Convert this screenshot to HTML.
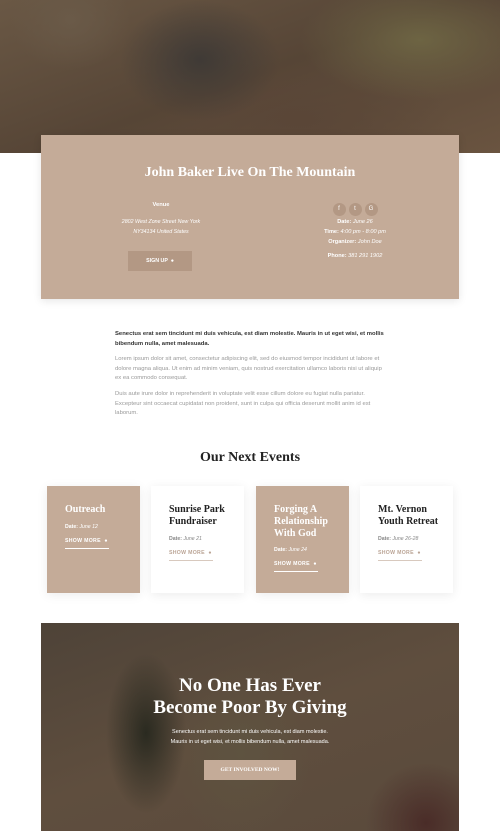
<!DOCTYPE html>
<html><head><style>
*{margin:0;padding:0;box-sizing:border-box}
body{width:500px;height:831px;background:#fff;position:relative;overflow:hidden;font-family:"Liberation Sans",sans-serif}
.serif{font-family:"Liberation Serif",serif;font-weight:bold}
.hero{position:absolute;left:0;top:0;width:500px;height:153px;background:
radial-gradient(ellipse 60px 50px at 70px 20px,#6a5a48,transparent),
radial-gradient(ellipse 80px 60px at 200px 60px,#3f3a36,transparent),
radial-gradient(ellipse 120px 60px at 420px 40px,#6d6443,transparent),
radial-gradient(ellipse 150px 60px at 300px 120px,#5a4637,transparent),
linear-gradient(160deg,#6a5845,#564536 50%,#6a5440);}
.box{position:absolute;left:41px;top:135px;width:418px;height:164px;background:#c4ab98;box-shadow:0 2px 8px rgba(0,0,0,.1);color:#fff;text-align:center}
.abs{position:absolute}
.ic{display:inline-block;width:13px;height:13px;border-radius:50%;background:#b39884;font-size:6px;line-height:13px;margin:0 1.5px;color:#fff}
p.t{font-size:5.9px;line-height:9.6px;color:#999;}
.card{position:absolute;top:486px;width:93px;height:107px;box-shadow:0 2px 10px rgba(0,0,0,.08)}
.card h3{font-family:"Liberation Serif",serif;font-size:10px;line-height:12px;font-weight:bold;position:absolute;left:18px;top:18px}
.card .d{position:absolute;left:18px;font-size:5.2px}
.card .s{position:absolute;left:18px;font-size:5.2px;font-weight:bold;letter-spacing:.3px;padding-bottom:4px;border-bottom:1.5px solid;width:44px}
.b{background:#c4ab98;color:#fff}.w{background:#fff;color:#222}
.w .s{color:#bba596;border-color:#d8c9be}.w .d{color:#888}
.give{position:absolute;left:41px;top:623px;width:418px;height:208px;background:
radial-gradient(ellipse 40px 80px at 105px 110px,#2a2a20,transparent),
radial-gradient(ellipse 70px 90px at 200px 130px,#5e5340,transparent),
radial-gradient(ellipse 60px 60px at 385px 200px,#4a2c28,transparent),
linear-gradient(160deg,#4e4338,#5f4e3e 50%,#5a4a3c);color:#fff;text-align:center}
</style></head><body>
<div class="hero"></div>
<div class="box">
<div class="abs serif" style="left:0;width:418px;top:30px;font-size:14px">John Baker Live On The Mountain</div>
<div class="abs" style="left:60px;width:120px;top:67px;font-size:5.8px;font-weight:bold">Venue</div>
<div class="abs" style="left:60px;width:120px;top:82px;font-size:5.3px;line-height:10px;font-style:italic">2802 West Zone Street New York<br>NY34134 United States</div>
<div class="abs" style="left:87px;top:116px;width:64px;height:20px;background:#b39884;font-size:5.3px;line-height:20px;font-weight:bold">SIGN UP &nbsp;●</div>
<div class="abs" style="left:250px;width:128px;top:62px"><span class="ic">f</span><span class="ic">t</span><span class="ic">G</span></div>
<div class="abs" style="left:250px;width:128px;top:82px;font-size:5.6px;line-height:10px"><b>Date:</b> <i>June 26</i><br><b>Time:</b> <i>4:00 pm - 8:00 pm</i><br><b>Organizer:</b> <i>John Doe</i></div>
<div class="abs" style="left:250px;width:128px;top:118px;font-size:5.6px"><b>Phone:</b> <i>381 291 1902</i></div>
</div>
<div class="abs" style="left:115px;top:330px;width:270px">
<p class="t" style="color:#333;font-weight:bold">Senectus erat sem tincidunt mi duis vehicula, est diam molestie. Mauris in ut eget wisi, et mollis bibendum nulla, amet malesuada.</p>
<p class="t" style="margin-top:6px">Lorem ipsum dolor sit amet, consectetur adipiscing elit, sed do eiusmod tempor incididunt ut labore et dolore magna aliqua. Ut enim ad minim veniam, quis nostrud exercitation ullamco laboris nisi ut aliquip ex ea commodo consequat.</p>
<p class="t" style="margin-top:6px">Duis aute irure dolor in reprehenderit in voluptate velit esse cillum dolore eu fugiat nulla pariatur. Excepteur sint occaecat cupidatat non proident, sunt in culpa qui officia deserunt mollit anim id est laborum.</p>
</div>
<div class="abs serif" style="left:0;width:500px;top:450px;text-align:center;font-size:14px;color:#222">Our Next Events</div>
<div class="card b" style="left:47px"><h3>Outreach</h3><div class="d" style="top:38px"><b>Date:</b> <i>June 12</i></div><div class="s" style="top:52px">SHOW MORE &nbsp;●</div></div>
<div class="card w" style="left:151px"><h3>Sunrise Park<br>Fundraiser</h3><div class="d" style="top:50px"><b>Date:</b> <i>June 21</i></div><div class="s" style="top:64px">SHOW MORE &nbsp;●</div></div>
<div class="card b" style="left:256px"><h3>Forging A<br>Relationship<br>With God</h3><div class="d" style="top:61px"><b>Date:</b> <i>June 24</i></div><div class="s" style="top:75px">SHOW MORE &nbsp;●</div></div>
<div class="card w" style="left:360px"><h3>Mt. Vernon<br>Youth Retreat</h3><div class="d" style="top:50px"><b>Date:</b> <i>June 26-28</i></div><div class="s" style="top:64px">SHOW MORE &nbsp;●</div></div>
<div class="give">
<div class="abs serif" style="left:0;width:418px;top:52px;font-size:19px;line-height:22px">No One Has Ever<br>Become Poor By Giving</div>
<div class="abs" style="left:0;width:418px;top:104px;font-size:5.5px;line-height:10px">Senectus erat sem tincidunt mi duis vehicula, est diam molestie.<br>Mauris in ut eget wisi, et mollis bibendum nulla, amet malesuada.</div>
<div class="abs" style="left:163px;top:137px;width:92px;height:20px;background:#c4ab98;font-family:'Liberation Serif',serif;font-size:5.5px;line-height:20px;font-weight:bold">GET INVOLVED NOW!</div>
</div>
</body></html>
